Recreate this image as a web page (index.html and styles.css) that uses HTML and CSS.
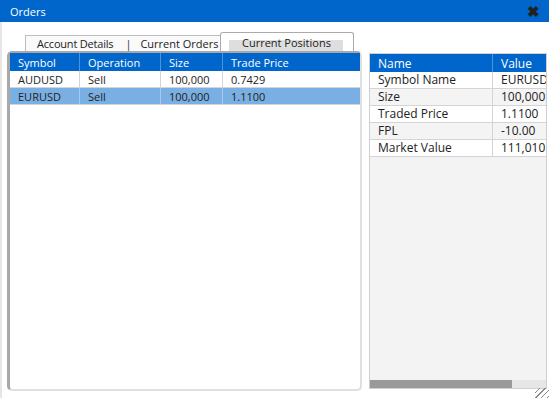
FILE: index.html
```html
<!DOCTYPE html>
<html lang="en">
<head>
    <meta charset="UTF-8">
    <meta name="viewport" content="width=device-width, initial-scale=1.0">
    <link rel="stylesheet" href="styles.css">
    <title>Orders</title>
</head>
<body>
    <div class="window">
        <div class="titlebar">
            <span class="title">Orders</span>
            <span class="close">&#10006;</span>
        </div>
        <div class="content">
            <div class="left">
                <div class="tabs">
                    <div class="tab-strip">
                        <span class="tab">Account Details</span>
                        <span class="sep">|</span>
                        <span class="tab">Current Orders</span>
                        <span class="sep">|</span>
                    </div>
                    <div class="tab active"><span>Current Positions</span></div>
                </div>
                <div class="panel">
                    <table class="grid">
                        <thead>
                            <tr>
                                <th class="c1">Symbol</th>
                                <th class="c2">Operation</th>
                                <th class="c3">Size</th>
                                <th>Trade Price</th>
                            </tr>
                        </thead>
                        <tbody>
                            <tr>
                                <td>AUDUSD</td>
                                <td>Sell</td>
                                <td>100,000</td>
                                <td>0.7429</td>
                            </tr>
                            <tr class="selected">
                                <td>EURUSD</td>
                                <td>Sell</td>
                                <td>100,000</td>
                                <td>1.1100</td>
                            </tr>
                        </tbody>
                    </table>
                </div>
            </div>
            <div class="right">
                <div class="props">
                    <table class="grid">
                        <thead>
                            <tr>
                                <th class="n">Name</th>
                                <th>Value</th>
                            </tr>
                        </thead>
                        <tbody>
                            <tr><td>Symbol Name</td><td>EURUSD</td></tr>
                            <tr class="alt"><td>Size</td><td>100,000</td></tr>
                            <tr><td>Traded Price</td><td>1.1100</td></tr>
                            <tr class="alt"><td>FPL</td><td>-10.00</td></tr>
                            <tr><td>Market Value</td><td>111,010</td></tr>
                        </tbody>
                    </table>
                </div>
                <div class="hscroll"><div class="thumb"></div></div>
            </div>
        </div>
        <div class="grip"></div>
    </div>
</body>
</html>
```

FILE: styles.css
```css
body {
    margin: 0;
    font-family: "Open Sans", "Noto Sans", sans-serif;
    font-size: 11px;
    color: #222;
    background-color: #fff;
}

.window {
    position: relative;
    width: 549px;
    height: 398px;
    overflow: hidden;
}

.titlebar {
    height: 22px;
    background-color: #0066cc;
    color: #fff;
    display: flex;
    align-items: center;
    justify-content: space-between;
    padding: 0 9px 0 10px;
}

.title {
    font-size: 11px;
}

.close {
    color: #222;
    font-size: 15px;
    font-weight: bold;
}

.content {
    display: flex;
    height: 376px;
    border-left: 2px solid #e6e6e6;
}

.left {
    margin-left: 5px;
    width: 355px;
    flex-shrink: 0;
    display: flex;
    flex-direction: column;
    padding-top: 10px;
}

.tabs {
    display: flex;
    align-items: flex-end;
    height: 19px;
    padding-left: 18px;
}

.tab-strip {
    display: flex;
    align-items: center;
    flex-shrink: 0;
    width: 195px;
    height: 16px;
    box-sizing: border-box;
    border: 1px solid #bdbdbd;
    border-bottom: none;
    border-right: none;
    background-color: #fafafa;
    padding-left: 11px;
    white-space: nowrap;
}

.tab {
    color: #222;
    line-height: 16px;
    white-space: nowrap;
}

.tab-strip .tab:first-child {
    letter-spacing: -0.2px;
}

.sep {
    margin: 0 9px 0 12px;
    color: #333;
}

.tab.active {
    flex-shrink: 0;
    height: 19px;
    width: 134px;
    border: 1px solid #aaa;
    border-bottom: none;
    border-radius: 3px 3px 0 0;
    background-color: #fff;
    box-sizing: border-box;
    padding: 7px 10px 0 8px;
}

.tab.active span {
    display: block;
    background-color: #dedede;
    height: 12px;
    line-height: 6px;
    padding-left: 13px;
}

.panel {
    flex: 1;
    border: 2px solid #a8a8a8;
    border-left-width: 3px;
    border-right-color: #e0e0e0;
    border-bottom-color: #e0e0e0;
    border-radius: 5px;
    margin-bottom: 7px;
    background-color: #fff;
}

.grid {
    border-collapse: collapse;
    table-layout: fixed;
    width: 100%;
}

.grid th {
    background-color: #0066cc;
    color: #fff;
    font-weight: normal;
    text-align: left;
    height: 18px;
    padding: 0 0 0 8px;
    border-right: 1px solid #4d94db;
}

.grid td {
    height: 16px;
    padding: 0 0 0 8px;
    border-right: 1px solid #d4d4d4;
    border-bottom: 1px solid #d4d4d4;
    white-space: nowrap;
    overflow: hidden;
}

.grid th:last-child,
.grid td:last-child {
    border-right: none;
}

.c1 { width: 61px; }
.c2 { width: 72px; }
.c3 { width: 53px; }

.selected td {
    background-color: #7aafe3;
    border-right-color: #a9c9ec;
}

.right {
    margin: 31px 2px 9px 7px;
    width: 176px;
    flex-shrink: 0;
    display: flex;
    flex-direction: column;
    border: 1px solid #cfcfcf;
    background-color: #f3f3f3;
    font-size: 12px;
}

.props {
    flex: 1;
    overflow: hidden;
}

.props .grid {
    width: 200px;
}

.props td {
    height: 16px;
    line-height: 16px;
    background-color: #fff;
}

.props .alt td {
    background-color: #f4f4f4;
}

.n { width: 114px; }

.hscroll {
    height: 8px;
    background-color: #e6e6e6;
}

.thumb {
    width: 142px;
    height: 8px;
    background-color: #999;
}

.grip {
    position: absolute;
    right: 0;
    bottom: 0;
    width: 14px;
    height: 10px;
    background: repeating-linear-gradient(135deg, transparent 0 3px, #888 3px 4px);
}
```
